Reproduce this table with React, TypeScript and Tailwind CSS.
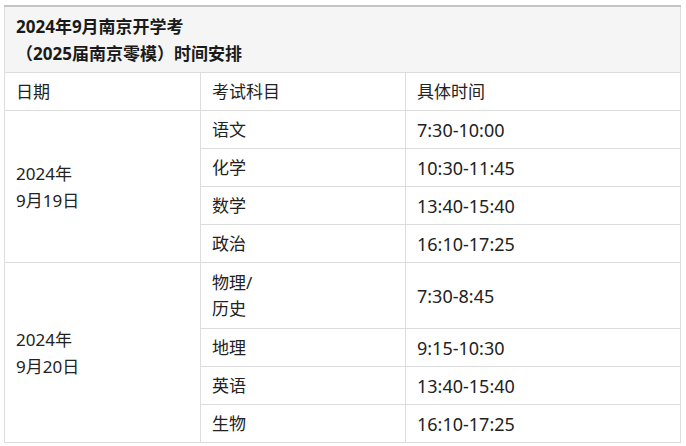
const font = {
  fontFamily: '"Noto Sans", "Noto Sans CJK SC", sans-serif',
};

type Row = { subject: string[]; time: string };

const days: { date: string[]; rows: Row[] }[] = [
  {
    date: ["2024年", "9月19日"],
    rows: [
      { subject: ["语文"], time: "7:30-10:00" },
      { subject: ["化学"], time: "10:30-11:45" },
      { subject: ["数学"], time: "13:40-15:40" },
      { subject: ["政治"], time: "16:10-17:25" },
    ],
  },
  {
    date: ["2024年", "9月20日"],
    rows: [
      { subject: ["物理/", "历史"], time: "7:30-8:45" },
      { subject: ["地理"], time: "9:15-10:30" },
      { subject: ["英语"], time: "13:40-15:40" },
      { subject: ["生物"], time: "16:10-17:25" },
    ],
  },
];

const cell = "border border-[#dddddd] px-[11px] align-middle";

export default function App() {
  return (
    <div className="min-h-[446px] w-[686px] bg-white pl-[4px] pt-[5px]" style={font}>
      <table className="w-[677px] table-fixed border-collapse text-[17px] leading-[26px] text-[#222]">
        <colgroup>
          <col className="w-[196px]" />
          <col className="w-[205px]" />
          <col />
        </colgroup>
        <thead>
          <tr>
            <th
              colSpan={3}
              className="border border-t-2 border-[#dddddd] border-t-[#c4c4c4] bg-[#f5f5f5] px-[11px] pt-[6px] pb-[5px] text-left font-bold leading-[27px] text-[#1a1a1a]"
            >
              2024年9月南京开学考
              <br />
              （2025届南京零模）时间安排
            </th>
          </tr>
          <tr className="h-[38px]">
            <td className={cell}>日期</td>
            <td className={cell}>考试科目</td>
            <td className={cell}>具体时间</td>
          </tr>
        </thead>
        <tbody>
          {days.map((d) =>
            d.rows.map((r, i) => (
              <tr key={d.date[1] + i} className={r.subject.length > 1 ? "h-[66px]" : "h-[38px]"}>
                {i === 0 && (
                  <td rowSpan={d.rows.length} className={cell + " leading-[27px]"}>
                    {d.date[0]}
                    <br />
                    {d.date[1]}
                  </td>
                )}
                <td className={cell}>
                  {r.subject.map((s, j) => (
                    <div key={j}>{s}</div>
                  ))}
                </td>
                <td className={cell + " text-[18px]"}>{r.time}</td>
              </tr>
            ))
          )}
        </tbody>
      </table>
    </div>
  );
}
